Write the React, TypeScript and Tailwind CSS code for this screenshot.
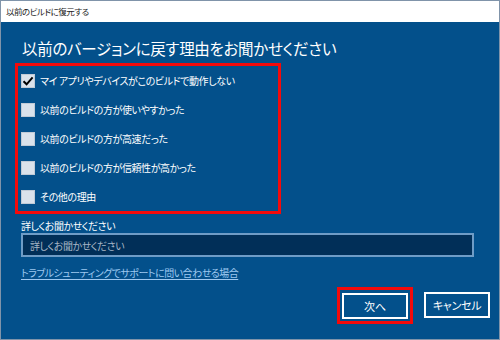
const reasons = [
  { label: "マイ アプリやデバイスがこのビルドで動作しない", checked: true },
  { label: "以前のビルドの方が使いやすかった", checked: false },
  { label: "以前のビルドの方が高速だった", checked: false },
  { label: "以前のビルドの方が信頼性が高かった", checked: false },
  { label: "その他の理由", checked: false },
];

const CheckBox = ({ checked }: { checked: boolean }) => (
  <span className="w-[14px] h-[14px] bg-[#dae2eb] border border-[#c0cad6] flex items-center justify-center shrink-0">
    {checked && (
      <svg width="12" height="12" viewBox="0 0 12 12">
        <path d="M1.5 6.2 L4.6 9.3 L10.6 2.4" fill="none" stroke="#000" strokeWidth="2" />
      </svg>
    )}
  </span>
);

const App = () => {
  return (
    <div className="w-[500px] h-[340px] flex flex-col border border-[#8094aa] font-['Noto_Sans_CJK_JP',sans-serif] [font-feature-settings:'palt'] overflow-hidden">
      {/* Title bar */}
      <div className="h-[21px] bg-white flex items-center pl-[5px] text-[8.5px] tracking-[-0.5px] text-[#222] shrink-0">
        以前のビルドに復元する
      </div>

      {/* Body */}
      <div className="flex-1 bg-[#03508b] flex flex-col pl-[20px] pr-[9px] pb-[15px] text-white">
        <h1 className="mt-[15px] ml-[1px] h-[22px] leading-[22px] text-[15.5px] tracking-[-0.3px] font-normal">
          以前のバージョンに戻す理由をお聞かせください
        </h1>

        {/* Reasons */}
        <div className="mt-[4px] -ml-[6px] w-[266px] border-[3px] border-[#f40a0a] px-[3px]">
          {reasons.map((r, i) => (
            <div key={i} className="h-[29px] flex items-center gap-[5px] text-[10px] tracking-[-0.4px]">
              <CheckBox checked={r.checked} />
              <span>{r.label}</span>
            </div>
          ))}
        </div>

        {/* Details */}
        <div className="mr-[16px] text-[10px] tracking-[-0.5px]">
          <div className="mt-[5px] leading-[14px]">詳しくお聞かせください</div>
          <div className="h-[24px] bg-[#012f58] border-2 border-[#6f9cc6] flex items-center pl-[7px] text-[#a7b6c6]">
            詳しくお聞かせください
          </div>
          <a className="mt-[9px] inline-block leading-[14px] text-[#9dc8f0] underline underline-offset-2 cursor-pointer">
            トラブルシューティングでサポートに問い合わせる場合
          </a>
        </div>

        {/* Buttons */}
        <div className="mt-auto flex items-center justify-end gap-[11px]">
          <div className="border-[3px] border-[#f40a0a] p-[2px]">
            <button className="w-[66px] h-[26px] border-2 border-white bg-[#03508b] text-[11px] text-white">
              次へ
            </button>
          </div>
          <button className="w-[66px] h-[26px] border-2 border-white bg-[#03508b] text-[11px] tracking-[-0.3px] text-white">
            キャンセル
          </button>
        </div>
      </div>
    </div>
  );
};

export default App;
